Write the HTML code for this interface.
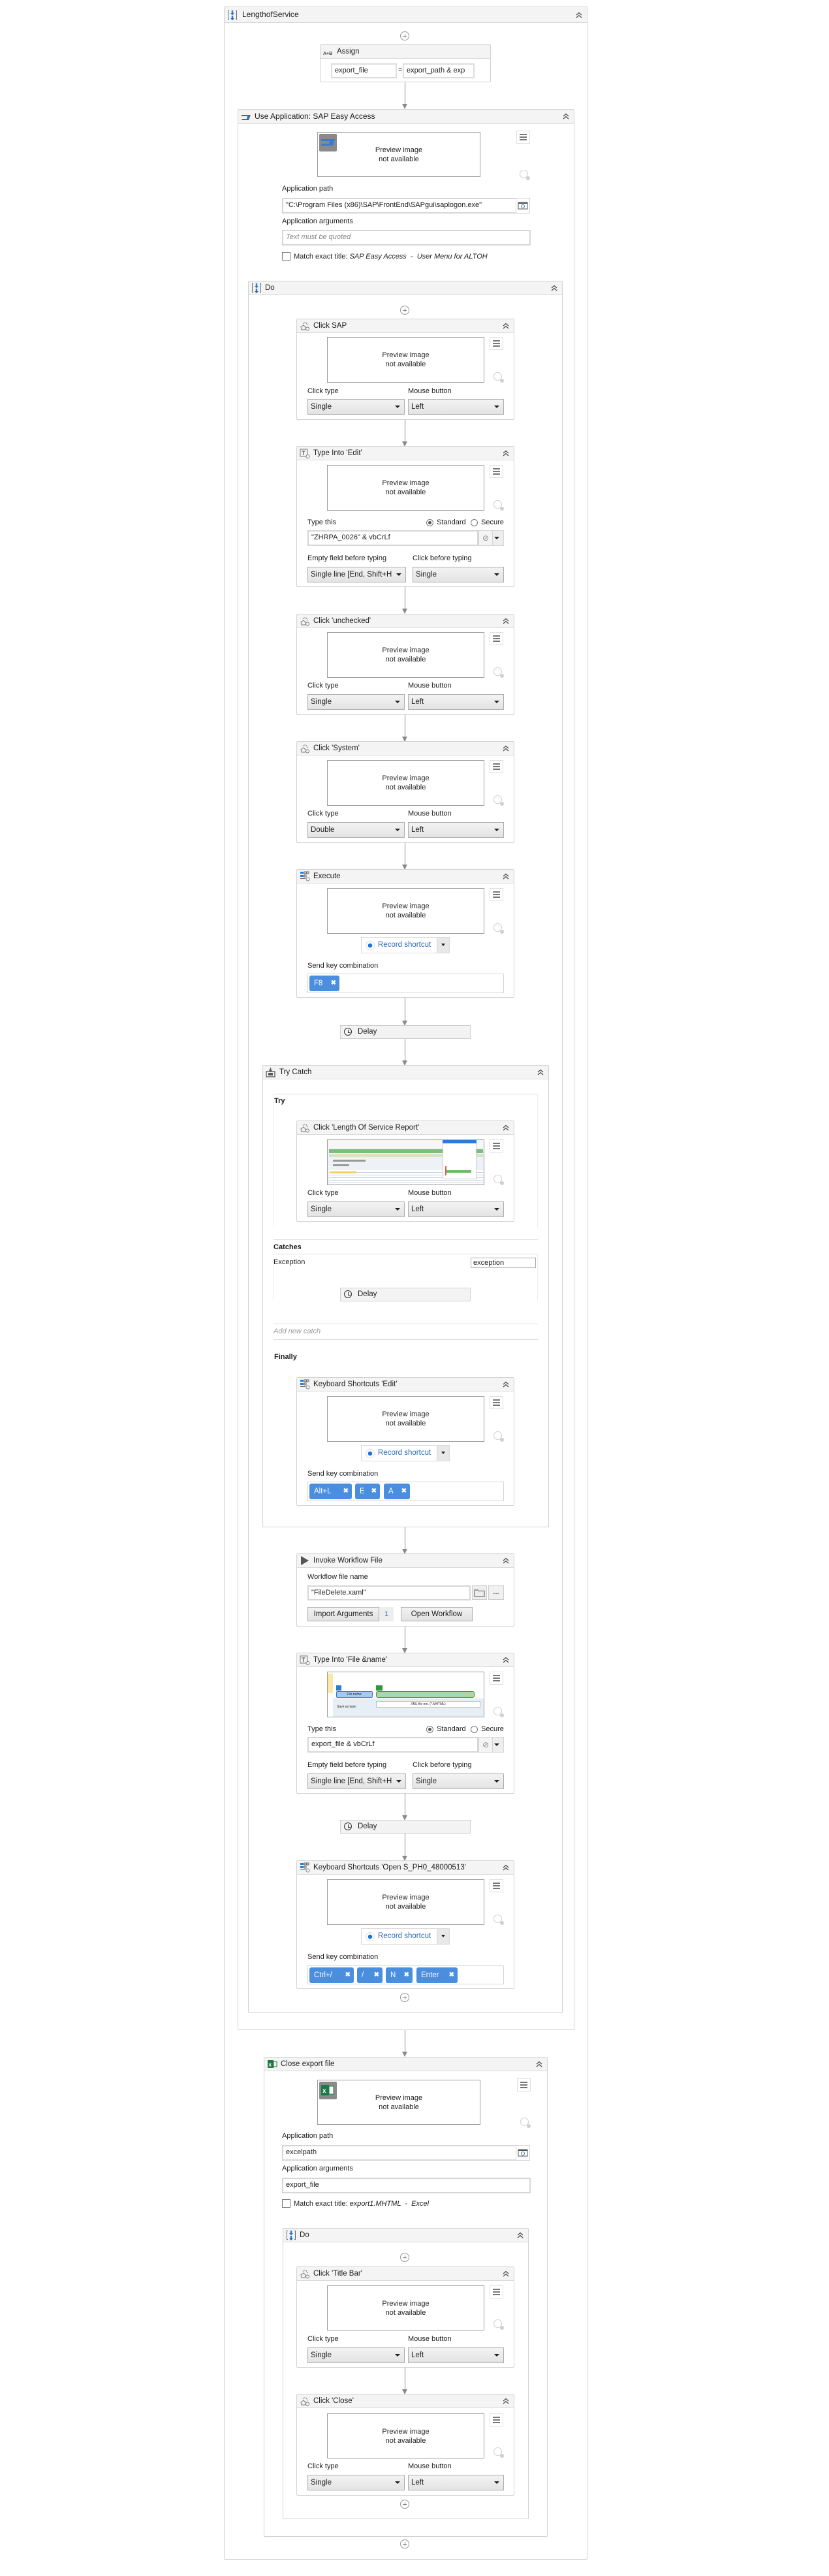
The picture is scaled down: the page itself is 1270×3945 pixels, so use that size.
<!DOCTYPE html>
<html><head><meta charset="utf-8">
<style>
*{box-sizing:border-box}
body{margin:0;width:1270px;height:3945px;background:#fff;font-family:"Liberation Sans",sans-serif;color:#1e1e1e;position:relative;overflow:hidden}
.a{position:absolute}
.box{position:absolute;border:1px solid #d2d2d2;background:#fff;border-radius:2px}
.hd{position:absolute;left:0;right:0;top:0;height:21px;background:#f4f4f4;border-bottom:1px solid #dadada;font-size:11.5px;line-height:20px;padding-left:25px;white-space:nowrap}
.hd .ic{position:absolute;left:4px;top:2px}
.cv{position:absolute;right:6px;top:5px}
.pv{position:absolute;border:1px solid #9c9c9c;background:#fff;text-align:center;font-size:11px;line-height:14px;display:flex;align-items:center;justify-content:center}
.hb{position:absolute;width:21px;height:20px;border:1px solid #dedede;background:#fff}
.hb:before{content:"";position:absolute;left:4px;top:4px;width:11px;height:2px;background:#777;box-shadow:0 4px 0 #777,0 8px 0 #777}
.tg{position:absolute;width:13px;height:13px;border:1.5px solid #d0d0d0;border-radius:50%}
.tg:after{content:"";position:absolute;right:-4px;bottom:-4px;width:6px;height:6px;border-radius:50%;background:#d0d0d0}
.lb{position:absolute;font-size:11px;white-space:nowrap}
.dd{position:absolute;height:24px;border:1px solid #adadad;background:linear-gradient(#f3f3f3,#e3e3e3);font-size:11.5px;line-height:22px;padding-left:4px;white-space:nowrap;overflow:hidden}
.dd:after{content:"";position:absolute;right:6px;top:9px;border-left:4px solid transparent;border-right:4px solid transparent;border-top:4px solid #222}
.in{position:absolute;border:2px solid #d6d6d6;background:#fff;font-size:11px;line-height:19px;padding-left:4px;white-space:nowrap;overflow:hidden}
.pl{position:absolute;width:14px;height:14px;border:1px solid #999;border-radius:50%;background:#fff}
.pl:before{content:"";position:absolute;left:3px;top:6px;width:6px;height:1px;background:#888}
.pl:after{content:"";position:absolute;left:6px;top:3px;width:1px;height:6px;background:#888}
.ar{position:absolute;left:620px;width:1px;background:#8a8a8a}
.ar:after{content:"";position:absolute;left:-4px;bottom:-1px;border-left:4.5px solid transparent;border-right:4.5px solid transparent;border-top:8px solid #8a8a8a}
.dl{position:absolute;left:521px;width:200px;height:21px;background:#f3f3f3;border:1px solid #cfcfcf;font-size:11.5px;line-height:19px;padding-left:26px}
.dl:before{content:"";position:absolute;left:5px;top:3px;width:10px;height:10px;border:1.5px solid #333;border-radius:50%}
.dl:after{content:"";position:absolute;left:11px;top:6px;width:3px;height:4px;border-left:1.3px solid #333;border-bottom:1.3px solid #333}
.rb{position:absolute;width:136px;height:25px;border:1px solid #dadada;background:#fff;font-size:11.5px;color:#2b6cb8;line-height:23px;padding-left:25px}
.rb:before{content:"";position:absolute;left:6px;top:5px;width:12px;height:12px;border:1px solid #ddd;border-radius:50%;background:radial-gradient(circle,#1a73e8 0 3px,#fff 3.5px)}
.rb i{position:absolute;right:0;top:0;width:19px;height:23px;background:#e8e8e8;border-left:1px solid #d0d0d0}
.rb i:after{content:"";position:absolute;left:6px;top:9px;border-left:3.5px solid transparent;border-right:3.5px solid transparent;border-top:4px solid #222}
.kin{position:absolute;border:1px solid #d6d6d6;background:#fff}
.ch{position:absolute;top:2px;height:24px;background:#4a8ee0;border-radius:3px;color:#fff;font-size:11.5px;line-height:24px;padding-left:7px;white-space:nowrap;overflow:hidden}
.ch b{position:absolute;right:5px;top:0;font-size:10px;font-weight:bold}
.rad{position:absolute;width:11px;height:11px;border:1px solid #777;border-radius:50%;background:#fff}
.rad.on:after{content:"";position:absolute;left:2px;top:2px;width:5px;height:5px;border-radius:50%;background:#555}
.sec{position:absolute;font-size:11px;font-weight:bold}
.ln{position:absolute;height:1px;background:#ddd}
.cb{position:absolute;width:13px;height:13px;border:1px solid #777;background:#fff}
.btn{position:absolute;height:22px;border:1px solid #adadad;background:linear-gradient(#f2f2f2,#e2e2e2);font-size:11.5px;line-height:20px;text-align:center}
</style></head><body>

<svg width="0" height="0" style="position:absolute">
<defs>
<symbol id="chv" viewBox="0 0 12 10"><path d="M2 5L6 1.5L10 5M2 9L6 5.5L10 9" fill="none" stroke="#444" stroke-width="1.2"/></symbol>
<symbol id="seq" viewBox="0 0 16 16"><path d="M3 1.5H1.5V14.5H3M13 1.5H14.5V14.5H13" fill="none" stroke="#666"/><path d="M8 1V7" stroke="#2d7bd8" stroke-width="2.5"/><path d="M5 5L8 8.5L11 5Z" fill="#2d7bd8"/><path d="M8 9V15" stroke="#2d7bd8" stroke-width="2.5"/><path d="M5 13L8 16L11 13Z" fill="#1f5fae"/></symbol>
<symbol id="clk" viewBox="0 0 16 16"><path d="M3 14L2 10L6 7L10 11L8 14Z" fill="none" stroke="#777"/><path d="M8 2V4M11 3L10 5M13 6L11 7M5 3L6 5" stroke="#888"/><circle cx="12" cy="12.5" r="2.5" fill="none" stroke="#777"/></symbol>
<symbol id="typ" viewBox="0 0 16 16"><rect x="1" y="2" width="11" height="11" fill="none" stroke="#777"/><path d="M3.5 5H8.5M6 5V11" stroke="#666" stroke-width="1.3"/><circle cx="12.5" cy="13" r="2.5" fill="#fff" stroke="#777"/></symbol>
<symbol id="kbd" viewBox="0 0 16 16"><rect x="1" y="1" width="5" height="3" fill="#2d7bd8"/><rect x="7" y="1" width="3" height="3" fill="none" stroke="#666"/><rect x="11" y="1" width="3" height="3" fill="none" stroke="#666"/><rect x="1" y="6" width="5" height="3" fill="#2d7bd8"/><rect x="7" y="6" width="3" height="3" fill="none" stroke="#666"/><path d="M1 11.5H9" stroke="#666"/><circle cx="12.5" cy="12.5" r="2.5" fill="#fff" stroke="#777"/></symbol>
</defs></svg>

<div class="box" style="left:343px;top:10px;width:557px;height:3910px">
 <div class="hd" style="height:24px;line-height:23px;font-size:12px;padding-left:27px"><svg class="ic" width="16" height="16" style="top:4px"><use href="#seq"/></svg>LengthofService<svg class="cv" width="12" height="10" style="top:7px"><use href="#chv"/></svg></div>
</div>
<div class="pl" style="left:613px;top:48px"></div>

<div class="box" style="left:490px;top:68px;width:262px;height:58px">
 <div class="hd"><span class="ic" style="font-size:7px;top:4px;color:#444;font-weight:bold">A+B</span>Assign</div>
 <div class="in" style="left:16px;top:28px;width:101px;height:23px;border-width:2px;border-color:#ddd">export_file</div>
 <div class="lb" style="left:119px;top:32px">=</div>
 <div class="in" style="left:126px;top:28px;width:110px;height:23px;border-color:#ddd">export_path &amp; exp</div>
</div>
<div class="ar" style="top:126px;height:40px"></div>

<div class="box" style="left:364px;top:167px;width:516px;height:2942px">
 <div class="hd" style="height:22px;line-height:21px;font-size:12px"><svg class="ic" width="16" height="12" viewBox="0 0 16 12" style="top:6px"><path d="M1 2H15L12 10H1L2 8H9L10 4H1Z" fill="#2f6fb8"/></svg>Use Application: SAP Easy Access<svg class="cv" width="12" height="10"><use href="#chv"/></svg></div>
 <div class="pv" style="left:121px;top:34px;width:250px;height:69px">Preview image<br>not available</div>
 <div class="a" style="left:124px;top:37px;width:27px;height:27px;background:#8a8a8a;border-radius:2px"><svg width="27" height="27" viewBox="0 0 27 27"><path d="M3 8H24L21 18H3L4 15H15L16 11H3Z" fill="#3a7bd0"/></svg></div>
 <div class="hb" style="left:426px;top:32px"></div>
 <div class="tg" style="left:431px;top:92px"></div>
 <div class="lb" style="left:67px;top:115px">Application path</div>
 <div class="in" style="left:67px;top:135px;width:360px;height:24px;line-height:19px">"C:\Program Files (x86)\SAP\FrontEnd\SAPgui\saplogon.exe"</div>
 <div class="a" style="left:425px;top:135px;width:22px;height:24px;border:1px solid #d6d6d6;background:#fff"><svg width="20" height="22"><rect x="3" y="6" width="14" height="10" fill="#fff" stroke="#555"/><rect x="3" y="6" width="14" height="2" fill="#555"/><circle cx="10" cy="12" r="2.5" fill="none" stroke="#2d7bd8"/></svg></div>
 <div class="lb" style="left:67px;top:165px">Application arguments</div>
 <div class="in" style="left:67px;top:184px;width:381px;height:24px;color:#888;font-style:italic">Text must be quoted</div>
 <div class="cb" style="left:67px;top:218px"></div>
 <div class="lb" style="left:85px;top:219px">Match exact title: <i>SAP Easy Access &nbsp;- &nbsp;User Menu for ALTOH</i></div>
</div>

<div class="box" style="left:380px;top:430px;width:482px;height:2653px">
 <div class="hd"><svg class="ic" width="16" height="16"><use href="#seq"/></svg>Do<svg class="cv" width="12" height="10"><use href="#chv"/></svg></div>
</div>
<div class="pl" style="left:613px;top:468px"></div>

<div class="box" style="left:454px;top:488px;width:334px;height:155px">
 <div class="hd"><svg class="ic" width="16" height="16"><use href="#clk"/></svg>Click SAP<svg class="cv" width="12" height="10"><use href="#chv"/></svg></div>
 <div class="pv" style="left:46px;top:27px;width:241px;height:70px">Preview image<br>not available</div>
 <div class="hb" style="left:295px;top:27px"></div><div class="tg" style="left:301px;top:81px"></div>
 <div class="lb" style="left:16px;top:104px">Click type</div><div class="lb" style="left:170px;top:104px">Mouse button</div>
 <div class="dd" style="left:16px;top:122px;width:149px">Single</div><div class="dd" style="left:170px;top:122px;width:147px">Left</div>
</div>
<div class="ar" style="top:643px;height:40px"></div>

<div class="box" style="left:454px;top:683px;width:334px;height:216px">
 <div class="hd"><svg class="ic" width="16" height="16"><use href="#typ"/></svg>Type Into 'Edit'<svg class="cv" width="12" height="10"><use href="#chv"/></svg></div>
 <div class="pv" style="left:46px;top:28px;width:241px;height:70px">Preview image<br>not available</div>
 <div class="hb" style="left:295px;top:28px"></div><div class="tg" style="left:301px;top:82px"></div>
 <div class="lb" style="left:16px;top:110px">Type this</div>
 <div class="rad on" style="left:198px;top:111px"></div><div class="lb" style="left:214px;top:110px">Standard</div>
 <div class="rad" style="left:266px;top:111px"></div><div class="lb" style="left:282px;top:110px">Secure</div>
 <div class="in" style="left:16px;top:128px;width:262px;height:24px">"ZHRPA_0026" &amp; vbCrLf</div>
 <div class="a" style="left:278px;top:128px;width:22px;height:24px;border:1px solid #d6d6d6;background:#f4f4f4;color:#888;font-size:12px;text-align:center;line-height:22px">&#8856;</div>
 <div class="dd" style="left:299px;top:128px;width:18px;border-color:#d6d6d6;background:#eee"></div>
 <div class="lb" style="left:16px;top:165px">Empty field before typing</div><div class="lb" style="left:177px;top:165px">Click before typing</div>
 <div class="dd" style="left:16px;top:184px;width:151px">Single line [End, Shift+H</div><div class="dd" style="left:177px;top:184px;width:140px">Single</div>
</div>
<div class="ar" style="top:899px;height:40px"></div>

<div class="box" style="left:454px;top:940px;width:334px;height:155px">
 <div class="hd"><svg class="ic" width="16" height="16"><use href="#clk"/></svg>Click 'unchecked'<svg class="cv" width="12" height="10"><use href="#chv"/></svg></div>
 <div class="pv" style="left:46px;top:27px;width:241px;height:70px">Preview image<br>not available</div>
 <div class="hb" style="left:295px;top:27px"></div><div class="tg" style="left:301px;top:81px"></div>
 <div class="lb" style="left:16px;top:103px">Click type</div><div class="lb" style="left:170px;top:103px">Mouse button</div>
 <div class="dd" style="left:16px;top:122px;width:149px">Single</div><div class="dd" style="left:170px;top:122px;width:147px">Left</div>
</div>
<div class="ar" style="top:1095px;height:40px"></div>

<div class="box" style="left:454px;top:1135px;width:334px;height:156px">
 <div class="hd"><svg class="ic" width="16" height="16"><use href="#clk"/></svg>Click 'System'<svg class="cv" width="12" height="10"><use href="#chv"/></svg></div>
 <div class="pv" style="left:46px;top:28px;width:241px;height:70px">Preview image<br>not available</div>
 <div class="hb" style="left:295px;top:28px"></div><div class="tg" style="left:301px;top:82px"></div>
 <div class="lb" style="left:16px;top:104px">Click type</div><div class="lb" style="left:170px;top:104px">Mouse button</div>
 <div class="dd" style="left:16px;top:123px;width:149px">Double</div><div class="dd" style="left:170px;top:123px;width:147px">Left</div>
</div>
<div class="ar" style="top:1291px;height:40px"></div>

<div class="box" style="left:454px;top:1331px;width:334px;height:197px">
 <div class="hd"><svg class="ic" width="16" height="16"><use href="#kbd"/></svg>Execute<svg class="cv" width="12" height="10"><use href="#chv"/></svg></div>
 <div class="pv" style="left:46px;top:28px;width:241px;height:70px">Preview image<br>not available</div>
 <div class="hb" style="left:295px;top:28px"></div><div class="tg" style="left:301px;top:82px"></div>
 <div class="rb" style="left:98px;top:103px">Record shortcut<i></i></div>
 <div class="lb" style="left:16px;top:141px">Send key combination</div>
 <div class="kin" style="left:16px;top:159px;width:301px;height:30px"><div class="ch" style="left:2px;width:46px">F8<b>&#10006;</b></div></div>
</div>
<div class="ar" style="top:1528px;height:42px"></div>
<div class="dl" style="top:1570px">Delay</div>
<div class="ar" style="top:1591px;height:40px"></div>

<div class="box" style="left:402px;top:1631px;width:439px;height:708px">
 <div class="hd"><svg class="ic" width="16" height="16" viewBox="0 0 16 16"><rect x="1" y="7" width="13" height="8" fill="none" stroke="#555" stroke-width="1.3"/><rect x="4" y="9" width="7" height="4" fill="#555"/><path d="M7.5 1V7M5 4L7.5 7L10 4" stroke="#555" fill="none" stroke-width="1.3"/></svg>Try Catch<svg class="cv" width="12" height="10"><use href="#chv"/></svg></div>
</div>
<div class="a" style="left:419px;top:1675px;width:405px;height:205px;border-top:1px solid #ddd;border-left:1px solid #eee;border-right:1px solid #eee"></div>
<div class="sec" style="left:420px;top:1680px">Try</div>

<div class="box" style="left:454px;top:1716px;width:334px;height:155px">
 <div class="hd"><svg class="ic" width="16" height="16"><use href="#clk"/></svg>Click 'Length Of Service Report'<svg class="cv" width="12" height="10"><use href="#chv"/></svg></div>
 <div class="pv" style="left:46px;top:28px;width:241px;height:70px;display:block;overflow:hidden;background:#eef2f6">
  <div class="a" style="left:0;top:0;width:240px;height:12px;background:#f7f7f7"></div>
  <div class="a" style="left:2px;top:14px;width:236px;height:6px;background:#7cbf7c"></div>
  <div class="a" style="left:2px;top:21px;width:236px;height:5px;background:#d9e4c6"></div>
  <div class="a" style="left:8px;top:30px;width:50px;height:3px;background:#999"></div>
  <div class="a" style="left:8px;top:37px;width:25px;height:3px;background:#999"></div>
  <div class="a" style="left:2px;top:46px;width:236px;height:22px;background:repeating-linear-gradient(#fff 0 3px,#c8d3de 3px 4px)"></div>
  <div class="a" style="left:4px;top:48px;width:40px;height:3px;background:#f0d060"></div>
  <div class="a" style="left:176px;top:0;width:52px;height:60px;background:#fff;border:1px solid #ccc"></div>
  <div class="a" style="left:176px;top:0;width:52px;height:5px;background:#2d7bd8"></div>
  <div class="a" style="left:182px;top:46px;width:38px;height:4px;background:#6dbb6d"></div>
  <div class="a" style="left:180px;top:40px;width:2px;height:14px;background:#e06040"></div>
 </div>
 <div class="hb" style="left:295px;top:28px"></div><div class="tg" style="left:301px;top:82px"></div>
 <div class="lb" style="left:16px;top:104px">Click type</div><div class="lb" style="left:170px;top:104px">Mouse button</div>
 <div class="dd" style="left:16px;top:123px;width:149px">Single</div><div class="dd" style="left:170px;top:123px;width:147px">Left</div>
</div>
<div class="ln" style="left:419px;top:1898px;width:405px"></div>
<div class="sec" style="left:419px;top:1904px">Catches</div>
<div class="a" style="left:419px;top:1920px;width:405px;height:72px;border-top:1px solid #ddd;border-left:1px solid #eee;border-right:1px solid #eee"></div>
<div class="lb" style="left:419px;top:1927px">Exception</div>
<div class="a" style="left:721px;top:1926px;width:100px;height:16px;border:1px solid #aaa;font-size:11px;line-height:14px;padding-left:3px;background:#fff">exception</div>
<div class="dl" style="top:1972px">Delay</div>
<div class="ln" style="left:419px;top:2027px;width:405px"></div>
<div class="lb" style="left:419px;top:2033px;color:#999;font-style:italic">Add new catch</div>
<div class="ln" style="left:419px;top:2051px;width:405px"></div>
<div class="sec" style="left:420px;top:2072px">Finally</div>

<div class="box" style="left:454px;top:2109px;width:334px;height:197px">
 <div class="hd"><svg class="ic" width="16" height="16"><use href="#kbd"/></svg>Keyboard Shortcuts 'Edit'<svg class="cv" width="12" height="10"><use href="#chv"/></svg></div>
 <div class="pv" style="left:46px;top:28px;width:241px;height:70px">Preview image<br>not available</div>
 <div class="hb" style="left:295px;top:28px"></div><div class="tg" style="left:301px;top:82px"></div>
 <div class="rb" style="left:98px;top:103px">Record shortcut<i></i></div>
 <div class="lb" style="left:16px;top:141px">Send key combination</div>
 <div class="kin" style="left:16px;top:159px;width:301px;height:30px">
  <div class="ch" style="left:2px;width:65px">Alt+L<b>&#10006;</b></div>
  <div class="ch" style="left:72px;width:38px">E<b>&#10006;</b></div>
  <div class="ch" style="left:116px;width:40px">A<b>&#10006;</b></div>
 </div>
</div>
<div class="ar" style="top:2339px;height:40px"></div>

<div class="box" style="left:454px;top:2379px;width:334px;height:112px">
 <div class="hd"><svg class="ic" width="16" height="16" viewBox="0 0 16 16"><path d="M2 1L14 8L2 15Z" fill="#555"/></svg>Invoke Workflow File<svg class="cv" width="12" height="10"><use href="#chv"/></svg></div>
 <div class="lb" style="left:16px;top:29px">Workflow file name</div>
 <div class="in" style="left:16px;top:48px;width:250px;height:23px">"FileDelete.xaml"</div>
 <div class="a" style="left:268px;top:48px;width:23px;height:22px;border:1px solid #ccc;background:#eee"><svg width="21" height="20"><path d="M3 6H8L9 7.5H18V16H3Z" fill="none" stroke="#555"/></svg></div>
 <div class="a" style="left:293px;top:48px;width:24px;height:22px;border:1px solid #ccc;background:#f0f0f0;text-align:center;font-size:11px;line-height:18px">...</div>
 <div class="btn" style="left:16px;top:81px;width:110px">Import Arguments</div>
 <div class="a" style="left:126px;top:81px;width:22px;height:22px;background:#eee;color:#2d7bd8;font-size:11px;text-align:center;line-height:22px">1</div>
 <div class="btn" style="left:159px;top:81px;width:110px">Open Workflow</div>
</div>
<div class="ar" style="top:2491px;height:40px"></div>

<div class="box" style="left:454px;top:2531px;width:334px;height:216px">
 <div class="hd"><svg class="ic" width="16" height="16"><use href="#typ"/></svg>Type Into 'File &amp;name'<svg class="cv" width="12" height="10"><use href="#chv"/></svg></div>
 <div class="pv" style="left:46px;top:28px;width:241px;height:70px;display:block;overflow:hidden;background:#fff">
  <div class="a" style="left:0;top:2px;width:8px;height:30px;background:#fbe7a6"></div>
  <div class="a" style="left:8px;top:40px;width:232px;height:30px;background:#e6eef6"></div>
  <div class="a" style="left:13px;top:20px;width:8px;height:8px;background:#2d7bd8"></div>
  <div class="a" style="left:13px;top:29px;width:56px;height:10px;background:#a9c8ee;border:1px solid #2d7bd8;border-radius:2px;font-size:5px;line-height:8px">File name:</div>
  <div class="a" style="left:74px;top:20px;width:10px;height:8px;background:#2a9a3a"></div>
  <div class="a" style="left:74px;top:29px;width:151px;height:10px;background:#a8d8a8;border:1px solid #2a9a3a;border-radius:3px"></div>
  <div class="a" style="left:74px;top:44px;width:160px;height:10px;background:#fff;border:1px solid #bbb;font-size:5px;line-height:8px">XML file nm. (*.MHTML)</div>
  <div class="a" style="left:14px;top:46px;font-size:5px">Save as type:</div>
 </div>
 <div class="hb" style="left:295px;top:28px"></div><div class="tg" style="left:301px;top:82px"></div>
 <div class="lb" style="left:16px;top:110px">Type this</div>
 <div class="rad on" style="left:198px;top:111px"></div><div class="lb" style="left:214px;top:110px">Standard</div>
 <div class="rad" style="left:266px;top:111px"></div><div class="lb" style="left:282px;top:110px">Secure</div>
 <div class="in" style="left:16px;top:128px;width:262px;height:24px">export_file &amp; vbCrLf</div>
 <div class="a" style="left:278px;top:128px;width:22px;height:24px;border:1px solid #d6d6d6;background:#f4f4f4;color:#888;font-size:12px;text-align:center;line-height:22px">&#8856;</div>
 <div class="dd" style="left:299px;top:128px;width:18px;border-color:#d6d6d6;background:#eee"></div>
 <div class="lb" style="left:16px;top:165px">Empty field before typing</div><div class="lb" style="left:177px;top:165px">Click before typing</div>
 <div class="dd" style="left:16px;top:184px;width:151px">Single line [End, Shift+H</div><div class="dd" style="left:177px;top:184px;width:140px">Single</div>
</div>
<div class="ar" style="top:2747px;height:40px"></div>
<div class="dl" style="top:2787px">Delay</div>
<div class="ar" style="top:2808px;height:41px"></div>

<div class="box" style="left:454px;top:2849px;width:334px;height:197px">
 <div class="hd"><svg class="ic" width="16" height="16"><use href="#kbd"/></svg>Keyboard Shortcuts 'Open S_PH0_48000513'<svg class="cv" width="12" height="10"><use href="#chv"/></svg></div>
 <div class="pv" style="left:46px;top:28px;width:241px;height:70px">Preview image<br>not available</div>
 <div class="hb" style="left:295px;top:28px"></div><div class="tg" style="left:301px;top:82px"></div>
 <div class="rb" style="left:98px;top:103px">Record shortcut<i></i></div>
 <div class="lb" style="left:16px;top:141px">Send key combination</div>
 <div class="kin" style="left:16px;top:160px;width:301px;height:29px">
  <div class="ch" style="left:2px;width:68px">Ctrl+/<b>&#10006;</b></div>
  <div class="ch" style="left:75px;width:39px">/<b>&#10006;</b></div>
  <div class="ch" style="left:119px;width:41px">N<b>&#10006;</b></div>
  <div class="ch" style="left:166px;width:63px">Enter<b>&#10006;</b></div>
 </div>
</div>
<div class="pl" style="left:613px;top:3052px"></div>
<div class="ar" style="top:3109px;height:40px"></div>

<div class="box" style="left:404px;top:3150px;width:435px;height:735px">
 <div class="hd"><svg class="ic" width="16" height="16" viewBox="0 0 16 16"><rect x="1" y="2" width="9" height="12" fill="#1e7a44"/><text x="2.5" y="11.5" font-size="8" fill="#fff" font-family="Liberation Sans" font-weight="bold">x</text><rect x="10" y="4" width="5" height="8" fill="none" stroke="#1e7a44"/></svg>Close export file<svg class="cv" width="12" height="10"><use href="#chv"/></svg></div>
 <div class="pv" style="left:81px;top:34px;width:250px;height:69px">Preview image<br>not available</div>
 <div class="a" style="left:84px;top:37px;width:27px;height:27px;background:#8a8a8a;border-radius:2px"><svg width="27" height="27" viewBox="0 0 27 27"><rect x="3" y="5" width="12" height="16" fill="#1e7a44"/><text x="5" y="17" font-size="10" fill="#fff" font-family="Liberation Sans" font-weight="bold">x</text><rect x="15" y="7" width="7" height="12" fill="#fff" stroke="#1e7a44"/></svg></div>
 <div class="hb" style="left:387px;top:32px"></div>
 <div class="tg" style="left:392px;top:92px"></div>
 <div class="lb" style="left:27px;top:114px">Application path</div>
 <div class="in" style="left:27px;top:134px;width:360px;height:24px">excelpath</div>
 <div class="a" style="left:385px;top:134px;width:22px;height:24px;border:1px solid #d6d6d6;background:#fff"><svg width="20" height="22"><rect x="3" y="6" width="14" height="10" fill="#fff" stroke="#555"/><rect x="3" y="6" width="14" height="2" fill="#555"/><circle cx="10" cy="12" r="2.5" fill="none" stroke="#2d7bd8"/></svg></div>
 <div class="lb" style="left:27px;top:164px">Application arguments</div>
 <div class="in" style="left:27px;top:184px;width:381px;height:24px">export_file</div>
 <div class="cb" style="left:27px;top:217px"></div>
 <div class="lb" style="left:45px;top:218px">Match exact title: <i>export1.MHTML &nbsp;- &nbsp;Excel</i></div>
</div>

<div class="box" style="left:433px;top:3412px;width:377px;height:446px">
 <div class="hd"><svg class="ic" width="16" height="16"><use href="#seq"/></svg>Do<svg class="cv" width="12" height="10"><use href="#chv"/></svg></div>
</div>
<div class="pl" style="left:613px;top:3450px"></div>

<div class="box" style="left:454px;top:3471px;width:334px;height:155px">
 <div class="hd"><svg class="ic" width="16" height="16"><use href="#clk"/></svg>Click 'Title Bar'<svg class="cv" width="12" height="10"><use href="#chv"/></svg></div>
 <div class="pv" style="left:46px;top:28px;width:241px;height:69px">Preview image<br>not available</div>
 <div class="hb" style="left:295px;top:28px"></div><div class="tg" style="left:301px;top:80px"></div>
 <div class="lb" style="left:16px;top:104px">Click type</div><div class="lb" style="left:170px;top:104px">Mouse button</div>
 <div class="dd" style="left:16px;top:123px;width:149px">Single</div><div class="dd" style="left:170px;top:123px;width:147px">Left</div>
</div>
<div class="ar" style="top:3626px;height:40px"></div>

<div class="box" style="left:454px;top:3666px;width:334px;height:156px">
 <div class="hd"><svg class="ic" width="16" height="16"><use href="#clk"/></svg>Click 'Close'<svg class="cv" width="12" height="10"><use href="#chv"/></svg></div>
 <div class="pv" style="left:46px;top:29px;width:241px;height:69px">Preview image<br>not available</div>
 <div class="hb" style="left:295px;top:29px"></div><div class="tg" style="left:301px;top:81px"></div>
 <div class="lb" style="left:16px;top:104px">Click type</div><div class="lb" style="left:170px;top:104px">Mouse button</div>
 <div class="dd" style="left:16px;top:123px;width:149px">Single</div><div class="dd" style="left:170px;top:123px;width:147px">Left</div>
</div>
<div class="pl" style="left:613px;top:3828px"></div>
<div class="pl" style="left:613px;top:3889px"></div>

</body></html>
